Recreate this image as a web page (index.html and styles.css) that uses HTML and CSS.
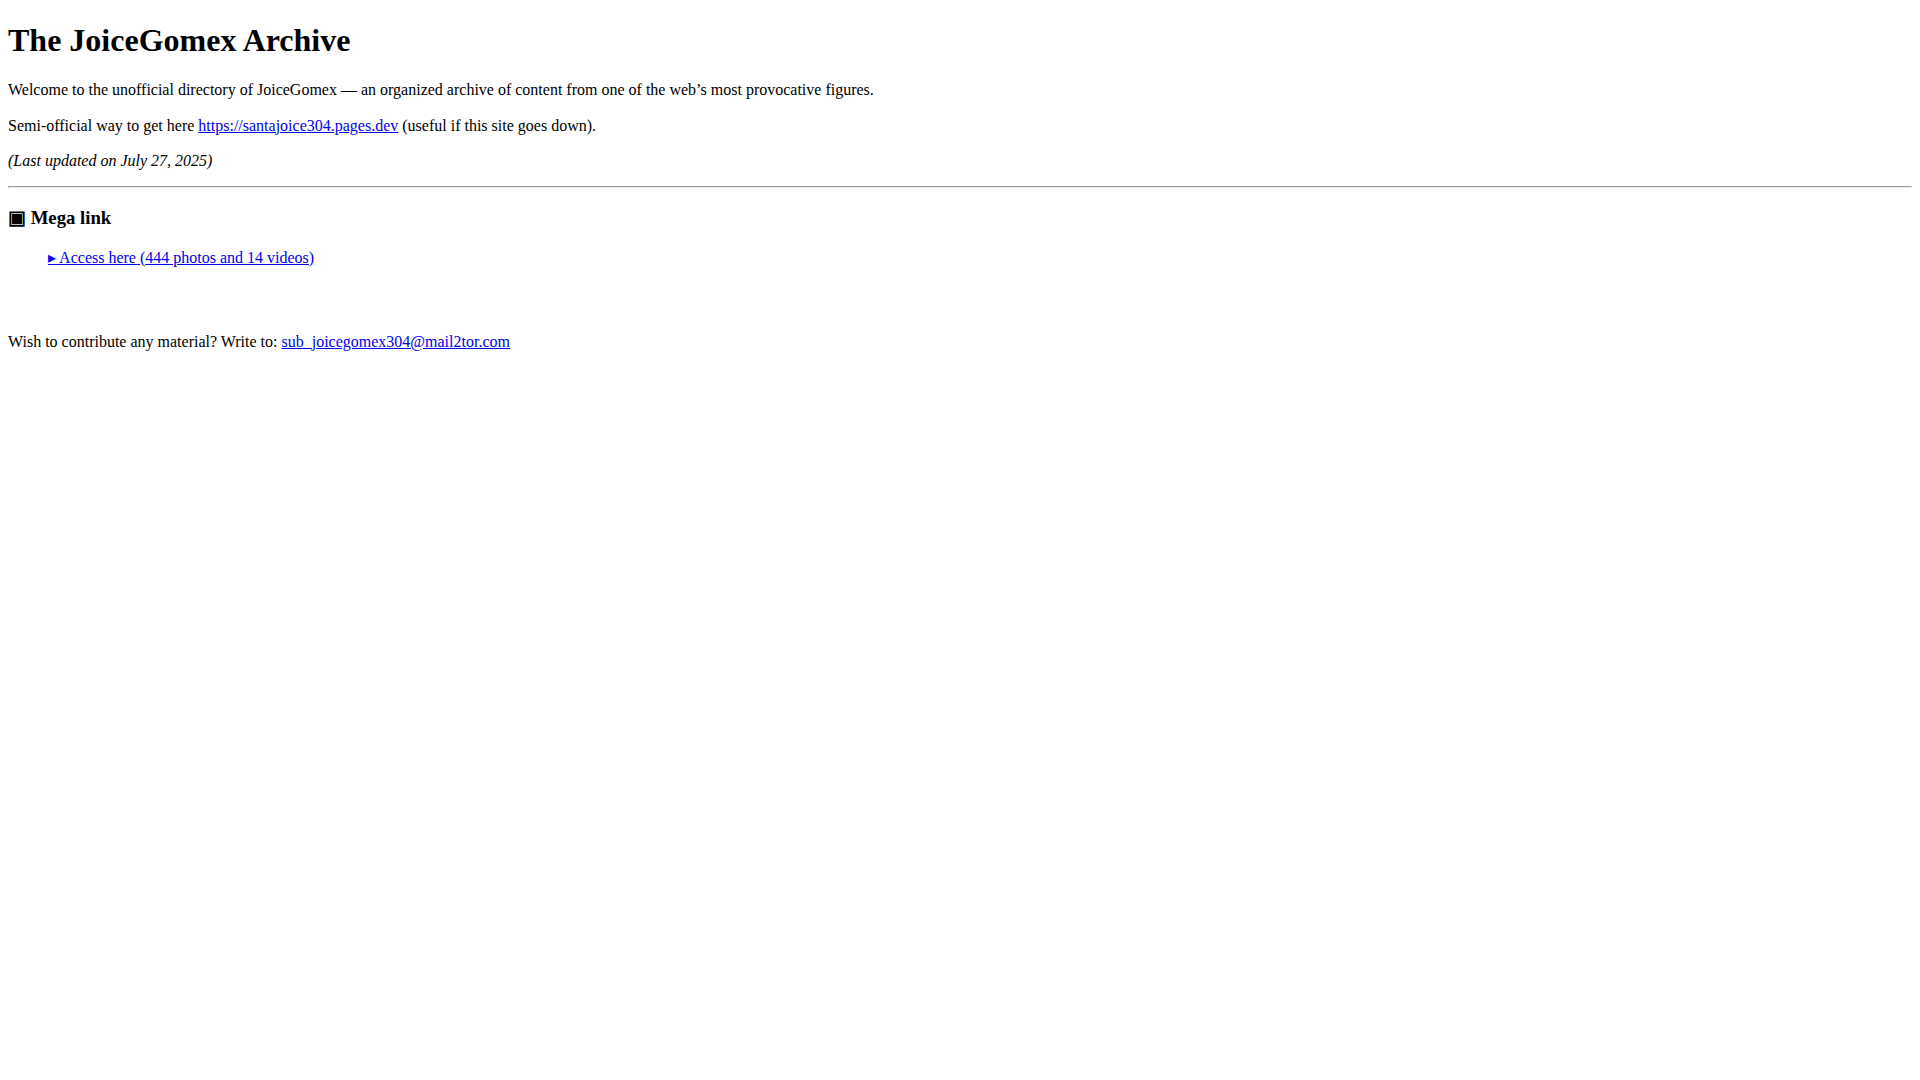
FILE: index.html
```html
<!DOCTYPE html>
<html lang="en">
<head>
<meta charset="utf-8">
<title>The JoiceGomex Archive</title>
<link rel="stylesheet" href="styles.css">
</head>
<body>
<h1 class="title">The JoiceGomex Archive</h1>
<p>Welcome to the unofficial directory of JoiceGomex — an organized archive of content from one of the web’s most provocative figures.</p>
<p>Semi-official way to get here <a href="#">https://santajoice304.pages.dev</a> (useful if this site goes down).</p>
<p><em>(Last updated on July 27, 2025)</em></p>
<hr>
<h3 class="section-title"><span class="box">▣</span> Mega link</h3>
<ul class="links">
<li><a href="#">▸ Access here (444 photos and 14 videos)</a></li>
</ul>
<p class="contact">Wish to contribute any material? Write to: <a href="#">sub_joicegomex304@mail2tor.com</a></p>
</body>
</html>
```
FILE: styles.css
```css
body {
  margin: 0 8px 8px;
  font-family: "Liberation Serif", "Times New Roman", serif;
  line-height: 1.2;
  color: #000;
  background: #fff;
}
.title {
  margin-top: 20.5px;
}
.links {
  list-style: none;
}
a {
  color: #0000ee;
}
.contact {
  margin-top: 65px;
}
```
